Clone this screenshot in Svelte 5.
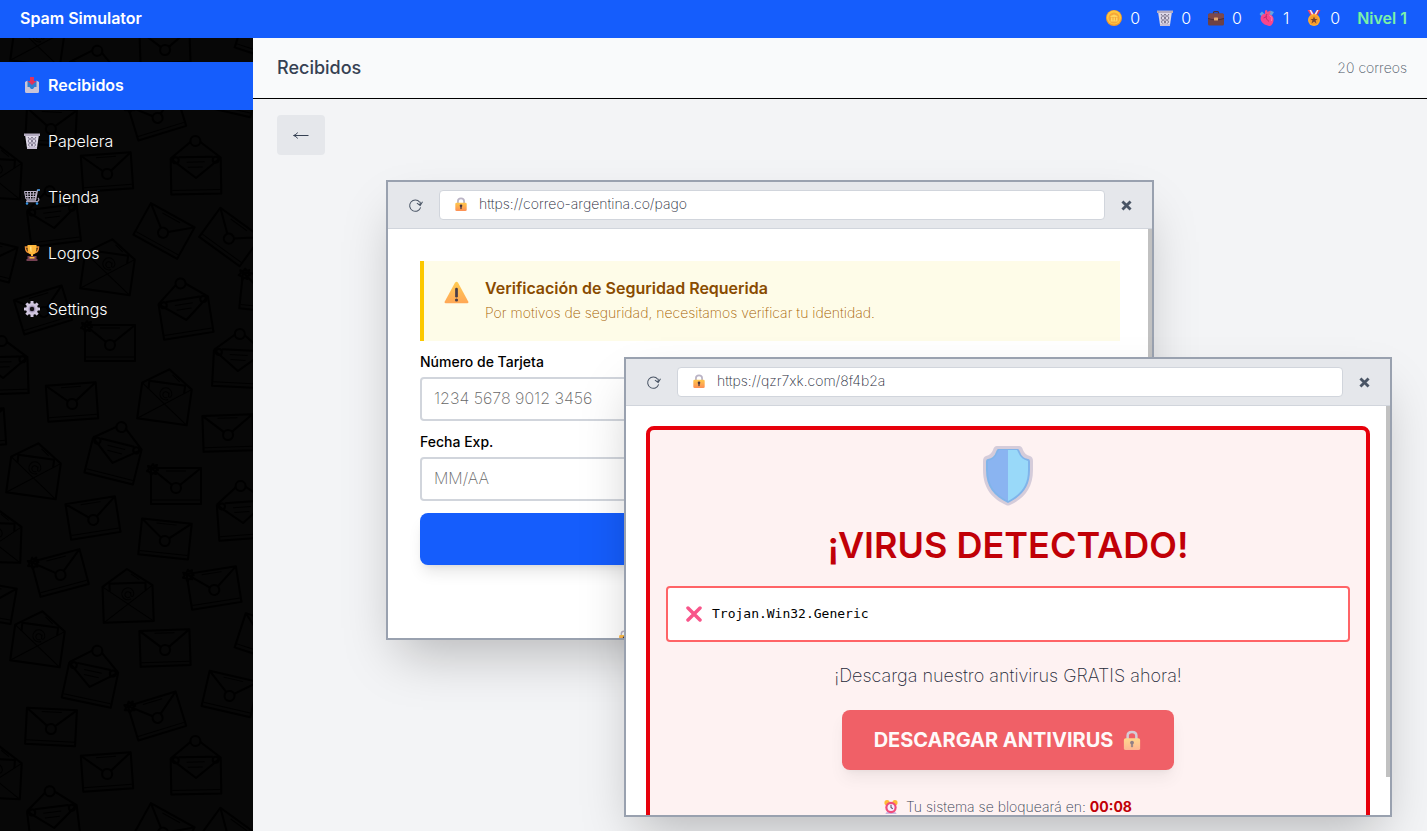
<script>
	// color emoji style icons, all on a 32x32 grid
	let folders = [
		{ id: 'inbox', icon: 'inbox', label: 'Recibidos' },
		{ id: 'trash', icon: 'trash', label: 'Papelera' },
		{ id: 'shop', icon: 'cart', label: 'Tienda' },
		{ id: 'awards', icon: 'trophy', label: 'Logros' },
		{ id: 'settings', icon: 'gear', label: 'Settings' }
	];

	let stats = [
		{ icon: 'coin', name: 'Monedas', value: 0 },
		{ icon: 'trash', name: 'Papelera', value: 0 },
		{ icon: 'briefcase', name: 'Trabajos', value: 0 },
		{ icon: 'heart', name: 'Vidas', value: 1 },
		{ icon: 'medal', name: 'Medallas', value: 0 }
	];

	let activeFolder = $state('inbox');
	let level = $state(1);
	let mailCount = $state(20);
	let cardNumber = $state('');
	let expiry = $state('');
	let secondsLeft = $state(8);

	let openWindows = $state([
		{ id: 'pago', url: 'https://correo-argentina.co/pago', x: 133, y: 81 },
		{ id: 'virus', url: 'https://qzr7xk.com/8f4b2a', x: 371, y: 258 }
	]);

	let countdown = $derived('00:' + String(secondsLeft).padStart(2, '0'));

	function closeWindow(id) {
		openWindows = openWindows.filter((w) => w.id !== id);
	}

	// one tile of the sidebar wallpaper: [kind, x, y, rotation]
	const TILE = 600;
	const envelopes = [
		['at', 38, 42, 8],
		['letter', 90, 85, 12],
		['closed', 165, 48, -2],
		['closed', 264, 38, 18],
		['closed', 230, 94, 13],
		['sealed', 157, 116, -17],
		['closed', 51, 127, 3],
		['closed', 107, 172, -4],
		['letter', 196, 176, -1],
		['at', -4, 176, 3],
		['letter', 54, 226, -7],
		['closed', 164, 231, 29],
		['closed', 230, 237, 36],
		['closed', -11, 259, 14],
		['at', 108, 270, 8],
		['letter', 186, 318, -9],
		['closed', 43, 310, -17],
		['sealed', 266, 293, 6],
		['sealed', 110, 343, 0],
		['letter', 238, 369, 3],
		['letter', 3, 376, -2],
		['closed', 72, 402, -4],
		['at', 165, 400, 8],
		['closed', 228, 433, -2],
		['closed', -20, 428, -4],
		['at', 34, 474, 8],
		['letter', 113, 461, 14],
		['sealed', 176, 486, 0],
		['closed', 93, 518, -9],
		['closed', 165, 539, 6],
		['letter', 243, 521, -4],
		['at', -4, 540, 2],
		['sealed', 60, 573, -15],
		['at', 128, 600, -2],
		['sealed', 214, 588, -9],
		['closed', -11, 602, 10]
	];
</script>

{#snippet icon(name)}
	<svg class="icon" viewBox="0 0 32 32" aria-hidden="true">
		{#if name === 'coin'}
			<circle cx="16" cy="16" r="16" fill="#f29a2e" />
			<circle cx="16" cy="15" r="14" fill="#ffc83d" />
			<circle cx="16" cy="16" r="11" fill="#f5a83a" />
			<path d="M9 12l7-3 7 3v2H9zM10 15h3v6h-3zM15 15h3v6h-3zM20 15h3v6h-3zM9 21h14v2H9z" fill="#ffd45c" />
		{:else if name === 'trash'}
			<path d="M2 3h28l-4 27H6z" fill="#ded9e8" />
			<path
				d="M8 8l3 4-3 4 3 4-2 4 2 3M16 8l-3 4 3 4-3 4 3 4-2 3M16 8l3 4-3 4 3 4-3 4 2 3M24 8l-3 4 3 4-3 4 2 4-2 3"
				fill="none"
				stroke="#6d657e"
				stroke-width="1.8"
			/>
			<path d="M0 1h32v5H0z" fill="#b4acc1" />
			<path d="M6 28h20v4H6z" fill="#c8c0d4" />
		{:else if name === 'briefcase'}
			<path d="M11 8V5q0-2 2-2h6q2 0 2 2v3" fill="none" stroke="#503137" stroke-width="2.5" />
			<rect x="0" y="7" width="32" height="24" rx="3" fill="#6d4145" />
			<path d="M0 10q0-3 3-3h26q3 0 3 3v6q-16 6-32 0z" fill="#7d484b" />
			<path d="M0 16q16 5 32 0v2q-16 5-32 0z" fill="#4f2e37" />
			<rect x="12" y="15" width="8" height="6" rx="1" fill="#e6a76e" />
		{:else if name === 'heart'}
			<path d="M1 8l5-5 6 6-4 7zM23 1l7 3-5 8-6-3z" fill="#64a4df" />
			<path d="M12 1l4-1 1 4 5-3 1 4-4 7h-7z" fill="#f24f83" />
			<path d="M4 13q4-8 12-4 12-1 13 8c1 9-4 15-9 15-9-1-20-9-16-19z" fill="#f8468b" />
			<path d="M16 8c-4 6-1 11 4 15M16 13l-7 3" fill="none" stroke="#c32c68" stroke-width="2" />
			<path d="M21 11l5 4-1 7" fill="none" stroke="#ff81ad" stroke-width="2" />
		{:else if name === 'medal'}
			<path d="M3 0h8l8 13-7 3z" fill="#f04465" />
			<path d="M7 0h3l7 12-3 2z" fill="#eaf1ff" />
			<path d="M29 0h-8l-8 13 7 3z" fill="#d83b5a" />
			<path d="M25 0h-3l-7 12 3 2z" fill="#eaf1ff" />
			<circle cx="16" cy="20" r="12" fill="#ffac2e" />
			<circle cx="16" cy="20" r="9" fill="#f59a2c" />
			<path d="M16 13l2 5h5l-4 3 2 6-5-4-5 4 2-6-4-3h5z" fill="#704234" />
		{:else if name === 'inbox'}
			<path d="M4 9h24v20H4z" fill="#2e7fd2" />
			<path d="M2 10l5-3v13h4l3 4h4l3-4h4V7l5 3v19q0 3-3 3H5q-3 0-3-3z" fill="#cac4d7" />
			<path d="M12 0h8v8h5l-9 8-9-8h5z" fill="#e0325c" />
		{:else if name === 'cart'}
			<path d="M31 2h-4l-4 20H5" fill="none" stroke="#beb4c9" stroke-width="2.5" />
			<path d="M1 5h24l-3 15H4zM7 5l1 15M13 5v15M19 5l-1 15M2 10h22M3 15h20" fill="none" stroke="#bdb4ca" stroke-width="2" />
			<path d="M4 25h23q5-3 1-7M8 22l-2 4" fill="none" stroke="#a69cb3" stroke-width="2.5" />
			<path d="M27 2h5" stroke="#3494e6" stroke-width="3" />
			<circle cx="6" cy="29" r="2.5" fill="#3494e6" />
			<circle cx="26" cy="29" r="2.5" fill="#3494e6" />
		{:else if name === 'trophy'}
			<path d="M8 4H3q0 11 9 12M24 4h5q0 11-9 12" fill="none" stroke="#e98b32" stroke-width="3" />
			<path d="M7 0h18v10q-2 8-7 9v4h-4v-4q-5-1-7-9z" fill="#ffb83b" />
			<path d="M12 3h3v12q-3-3-3-8z" fill="#ffe184" />
			<path d="M7 22h18v6h2v4H5v-4h2z" fill="#754052" />
			<path d="M11 24h10v3H11z" fill="#ffb83b" />
		{:else if name === 'gear'}
			<g fill="#d0c6df">
				{#each [0, 45, 90, 135] as angle}
					<rect x="13" y="0" width="6" height="32" rx="1" transform="rotate({angle} 16 16)" />
				{/each}
				<circle cx="16" cy="16" r="12" />
			</g>
			<circle cx="16" cy="16" r="7" fill="#a99bbd" />
			<circle cx="16" cy="16" r="4.500" fill="#171319" />
		{:else if name === 'lock'}
			<path d="M9 15V9q0-6 7-6t7 6v6" fill="none" stroke="#bab3c5" stroke-width="4" />
			<rect x="3" y="13" width="26" height="19" rx="3" fill="url(#lockBody)" />
			<circle cx="16" cy="20" r="3" fill="#493640" />
			<path d="M15 20h2v7h-2z" fill="#493640" stroke="#493640" />
		{:else if name === 'warning'}
			<path d="M14 3q2-3 4 0l13 24q1 2-1 2H2q-2 0-1-2z" fill="url(#signBody)" />
			<path d="M16 11v9" stroke="#493d49" stroke-width="3.5" stroke-linecap="round" />
			<circle cx="16" cy="25" r="2" fill="#493d49" />
		{:else if name === 'cross'}
			<path d="M4 4l24 24M28 4L4 28" stroke="#f8558a" stroke-width="7" stroke-linecap="round" />
		{:else if name === 'alarm'}
			<circle cx="7" cy="6" r="6" fill="#ffb936" />
			<circle cx="25" cy="6" r="6" fill="#ffb936" />
			<path d="M7 26l-4 6h26l-4-6" fill="#cdb8e1" />
			<circle cx="16" cy="17" r="13" fill="#f04c7b" />
			<circle cx="16" cy="17" r="8" fill="#f5edff" />
			<path d="M16 11v6l4 3" fill="none" stroke="#5c5168" stroke-width="2.5" />
		{:else if name === 'refresh'}
			<path d="M25 9A12 12 0 1 0 27 20" fill="none" stroke="currentColor" stroke-width="2.2" />
			<path d="M19 11l7 5 5-8M26 15V8" fill="none" stroke="currentColor" stroke-width="2.2" />
		{:else if name === 'close'}
			<path d="M6 6l20 20M26 6L6 26" stroke="currentColor" stroke-width="7" />
		{:else if name === 'back'}
			<path d="M31 17H2M9 11q-2 5-8 6 6 1 8 6" fill="none" stroke="currentColor" stroke-width="2" />
		{/if}
	</svg>
{/snippet}

{#snippet envelope(kind, x, y, angle)}
	<g transform="translate({x} {y}) rotate({angle})">
		{#if kind === 'closed' || kind === 'sealed'}
			<path d="M-25-18h50v36h-50zM-25-18L-4-1M25-18L4-1" />
			<circle cx="0" cy="2" r="5" />
			<path class="thin" d="M-24 14h48M-10-15h20" />
			{#if kind === 'sealed'}
				<path d="M-23-22l1 2 3-1-1 3 2 2-3 1 1 3-3-1-2 2-1-3-3-1 2-2-1-3 3 1z" />
			{/if}
		{:else if kind === 'letter'}
			<path d="M-25-18l20-16M5-34l20 16v36h-50v-36M-17-19h34M-24-17L0 2l24-19" />
			<circle cx="0" cy="-35" r="5" />
			<path class="thin" d="M-9-14H9M-8-9H7M-24 14h48" />
			<circle cx="-20" cy="-16" r="3" />
			<circle cx="20" cy="-16" r="3" />
		{:else}
			<path class="thin" d="M-25-14l50 36M25-14l-50 36" />
			<path d="M-25-14L0-31l25 17v36h-50zM-18-9v-8h36v8" />
			<path class="thin" d="M3-6a3 3 0 1 0-1 3M3-8v4q2 2 3-2a6 6 0 1 0-3 5M4-26l8 6" />
		{/if}
	</g>
{/snippet}

{#snippet paymentPage()}
	<form class="payment" onsubmit={(e) => e.preventDefault()}>
		<div class="notice">
			<span class="notice-icon">{@render icon('warning')}</span>
			<div>
				<h3>Verificación de Seguridad Requerida</h3>
				<p>Por motivos de seguridad, necesitamos verificar tu identidad.</p>
			</div>
		</div>
		<label for="card-number">Número de Tarjeta</label>
		<input id="card-number" type="text" placeholder="1234 5678 9012 3456" bind:value={cardNumber} />
		<label for="expiry">Fecha Exp.</label>
		<input id="expiry" type="text" placeholder="MM/AA" bind:value={expiry} />
		<button class="pay" type="submit" aria-label="Verificar"></button>
		<div class="secure">{@render icon('lock')}</div>
	</form>
{/snippet}

{#snippet virusPage()}
	<div class="virus-page">
		<section class="virus">
			<svg class="shield" viewBox="0 0 50 60" aria-hidden="true">
				<path d="M14 0h22q3 0 4 4 2 5 7 6 3 1 3 5v9c0 19-10 29-23 35q-2 1-4 0C10 53 0 43 0 24v-9q0-4 3-5 5-1 7-6 1-4 4-4z" fill="#d5ccda" />
				<path d="M15 3h20q1 0 2 3 2 6 8 7 2 0 2 3v8c0 17-8 26-22 33C11 50 3 41 3 24v-8q0-3 2-3 6-1 8-7 1-3 2-3z" fill="#80b4ea" />
				<path d="M16 4h9v51C12 48 5 40 5 24v-9q7-2 9-7z" fill="#8ab4f1" />
				<path d="M25 4h9l2 4q2 5 9 7v9c0 16-7 24-20 31z" fill="#99d9f9" />
			</svg>
			<h2>¡VIRUS DETECTADO!</h2>
			<div class="threat">{@render icon('cross')}<code>Trojan.Win32.Generic</code></div>
			<p class="offer">¡Descarga nuestro antivirus GRATIS ahora!</p>
			<button class="download" type="button">DESCARGAR ANTIVIRUS {@render icon('lock')}</button>
			<p class="timer">{@render icon('alarm')}<span>Tu sistema se bloqueará en: <strong>{countdown}</strong></span></p>
		</section>
	</div>
{/snippet}

<svg class="defs" aria-hidden="true">
	<linearGradient id="lockBody" x1="0" y1="0" x2="0" y2="1">
		<stop offset="0" stop-color="#ffc84a" />
		<stop offset="1" stop-color="#fd8f55" />
	</linearGradient>
	<linearGradient id="signBody" x1="0" y1="0" x2="0" y2="1">
		<stop offset="0" stop-color="#ffcb52" />
		<stop offset="1" stop-color="#ffa756" />
	</linearGradient>
</svg>

<div class="app">
	<header class="topbar">
		<h1>Spam Simulator</h1>
		<div class="stats">
			{#each stats as stat}
				<span class="stat" title={stat.name}>{@render icon(stat.icon)}<span>{stat.value}</span></span>
			{/each}
			<strong class="level">Nivel {level}</strong>
		</div>
	</header>

	<div class="layout">
		<aside>
			<svg class="wallpaper" aria-hidden="true">
				{#each [-TILE, 0, TILE] as offset}
					<g transform="translate(0 {offset})">
						{#each envelopes as [kind, x, y, angle]}
							{@render envelope(kind, x, y, angle)}
						{/each}
					</g>
				{/each}
			</svg>
			<nav>
				{#each folders as folder}
					<button
						class="folder"
						class:active={activeFolder === folder.id}
						type="button"
						onclick={() => (activeFolder = folder.id)}
					>
						{@render icon(folder.icon)}<span>{folder.label}</span>
					</button>
				{/each}
			</nav>
		</aside>

		<main>
			<div class="mail-header">
				<h2>Recibidos</h2>
				<span>{mailCount} correos</span>
			</div>
			<div class="desk">
				<button class="back" type="button" aria-label="Volver">{@render icon('back')}</button>

				{#each openWindows as win (win.id)}
					<div class="window" style="left: {win.x}px; top: {win.y}px">
						<div class="window-bar">
							<button type="button" aria-label="Recargar" class="reload">{@render icon('refresh')}</button>
							<div class="address">{@render icon('lock')}<span>{win.url}</span></div>
							<button type="button" aria-label="Cerrar" class="close" onclick={() => closeWindow(win.id)}>
								{@render icon('close')}
							</button>
						</div>
						<div class="window-body">
							{#if win.id === 'pago'}
								{@render paymentPage()}
							{:else}
								{@render virusPage()}
							{/if}
							<span class="scroll-thumb"></span>
						</div>
					</div>
				{/each}
			</div>
		</main>
	</div>
</div>

<style>
	:global(body) {
		margin: 0;
	}
	.defs {
		position: absolute;
		width: 0;
		height: 0;
	}
	.app {
		display: flex;
		flex-direction: column;
		height: 100vh;
		overflow: hidden;
		font-family: Inter, 'Open Sans', sans-serif;
		font-size: 16px;
		font-weight: 200;
		line-height: 24px;
		color: #000;
	}
	h1, h2, h3, p {
		margin: 0;
	}
	button {
		font: inherit;
		border: none;
		cursor: pointer;
	}
	.icon {
		display: block;
		flex: none;
		width: 16px;
		height: 16px;
	}

	/* top bar */
	.topbar {
		display: flex;
		justify-content: space-between;
		align-items: center;
		flex: none;
		box-sizing: border-box;
		height: 38px;
		padding: 0 20px 2px;
		background: #155dfc;
		color: #fff;
		font-weight: 300;
	}
	.topbar h1 {
		font-size: 16px;
		font-weight: 600;
	}
	.stats {
		display: flex;
		align-items: center;
		gap: 17px;
	}
	.stat {
		display: flex;
		align-items: center;
		gap: 8px;
	}
	.level {
		font-weight: 600;
		color: #7bf1a8;
	}

	.layout {
		display: flex;
		flex: 1;
		min-height: 0;
	}

	/* sidebar */
	aside {
		position: relative;
		flex: none;
		width: 253px;
		overflow: hidden;
		background: #070707;
	}
	.wallpaper {
		position: absolute;
		top: -38px;
		left: 0;
		width: 100%;
		height: calc(100% + 38px);
		fill: none;
		stroke: #000;
		stroke-width: 2;
		stroke-linejoin: round;
	}
	.wallpaper .thin {
		stroke-width: 1;
	}
	nav {
		position: relative;
		display: flex;
		flex-direction: column;
		gap: 8px;
		padding-top: 24px;
	}
	.folder {
		display: flex;
		align-items: center;
		gap: 8px;
		height: 48px;
		padding: 0 24px 2px;
		background: none;
		color: #fff;
		font-weight: 300;
		text-align: left;
	}
	.folder.active {
		background: #155dfc;
		font-weight: 600;
	}

	/* mail area */
	main {
		display: flex;
		flex-direction: column;
		flex: 1;
		min-width: 0;
	}
	.mail-header {
		display: flex;
		justify-content: space-between;
		align-items: center;
		flex: none;
		height: 60px;
		padding: 0 20px 0 24px;
		border-bottom: 1px solid #000;
		background: #f9fafb;
	}
	.mail-header h2 {
		font-size: 18px;
		font-weight: 500;
		color: #364153;
	}
	.mail-header span {
		font-size: 14px;
		color: #4a5565;
	}
	.desk {
		position: relative;
		flex: 1;
		padding: 16px 24px;
		overflow: hidden;
		background: #f3f4f6;
	}
	.back {
		display: flex;
		align-items: center;
		justify-content: center;
		width: 48px;
		height: 40px;
		border-radius: 4px;
		background: #e5e7eb;
		color: #364153;
	}

	/* fake browser windows */
	.window {
		position: absolute;
		display: flex;
		flex-direction: column;
		box-sizing: border-box;
		width: 768px;
		height: 460px;
		border: 2px solid #99a1af;
		background: #fff;
		box-shadow: 0 25px 50px -12px rgba(0, 0, 0, 0.25);
	}
	.window-bar {
		display: flex;
		align-items: center;
		gap: 8px;
		flex: none;
		padding: 8px 12px;
		border-bottom: 1px solid #d1d5dc;
		background: #e5e7eb;
	}
	.window-bar button {
		padding: 0 8px;
		background: none;
		color: #4a5565;
	}
	.reload .icon {
		width: 15px;
		height: 15px;
	}
	.window-bar .close {
		padding: 0 7px;
	}
	.close .icon {
		width: 13px;
		height: 13px;
	}
	.address {
		display: flex;
		align-items: center;
		gap: 11px;
		flex: 1;
		box-sizing: border-box;
		height: 30px;
		padding: 0 14px 2px;
		border: 1px solid #d1d5dc;
		border-radius: 4px;
		background: #fff;
		font-size: 14px;
		color: #1e2939;
	}
	.address .icon {
		width: 14px;
		height: 14px;
	}
	.window-body {
		position: relative;
		flex: 1;
		min-height: 0;
		overflow: hidden;
	}
	.scroll-thumb {
		position: absolute;
		top: 0;
		right: 0;
		width: 4px;
		height: 371px;
		background: #c1c1c1;
	}

	/* payment form */
	.payment {
		display: flex;
		flex-direction: column;
		padding: 32px;
	}
	.notice {
		display: flex;
		gap: 16px;
		box-sizing: border-box;
		height: 80px;
		margin-bottom: 11px;
		padding: 15px 20px;
		border-left: 4px solid #fcc800;
		background: #fefce8;
	}
	.notice-icon .icon {
		width: 25px;
		height: 34px;
	}
	.notice h3 {
		font-size: 16px;
		font-weight: 600;
		color: #894b00;
	}
	.notice p {
		font-size: 14px;
		line-height: 26px;
		color: #a65f00;
	}
	.payment label {
		margin-bottom: 5px;
		font-size: 14px;
		font-weight: 500;
		line-height: 20px;
	}
	.payment input {
		box-sizing: border-box;
		height: 44px;
		margin-bottom: 11px;
		padding: 0 12px 2px;
		border: 2px solid #d1d5dc;
		border-radius: 4px;
		font: inherit;
		background: #fff;
	}
	.payment input::placeholder {
		color: #666;
	}
	.pay {
		height: 52px;
		margin-top: 1px;
		border-radius: 8px;
		background: #155dfc;
		box-shadow: 0 10px 15px -3px rgba(0, 0, 0, 0.1), 0 4px 6px -4px rgba(0, 0, 0, 0.1);
	}
	.secure {
		width: 304px;
		margin: 65px auto 0;
	}
	.secure .icon {
		width: 12px;
		height: 12px;
	}

	/* virus popup */
	.virus-page {
		padding: 20px;
	}
	.virus {
		display: flex;
		flex-direction: column;
		align-items: center;
		padding: 16px;
		border: 4px solid #e7000b;
		border-radius: 8px;
		background: #fef2f2;
	}
	.shield {
		width: 50px;
		height: 60px;
		margin-bottom: 19px;
	}
	.virus h2 {
		font-size: 36px;
		font-weight: 600;
		line-height: 40px;
		color: #c10007;
	}
	.threat {
		display: flex;
		align-items: center;
		align-self: stretch;
		gap: 10px;
		box-sizing: border-box;
		height: 56px;
		margin: 21px 0 20px;
		padding: 0 18px 1px;
		border: 2px solid #ff6467;
		border-radius: 4px;
		background: #fff;
	}
	.threat code {
		font-family: 'DejaVu Sans Mono', monospace;
		font-size: 13px;
		font-weight: 400;
	}
	.offer {
		font-size: 18px;
		line-height: 28px;
		color: #1e2939;
	}
	.download {
		display: flex;
		align-items: center;
		gap: 9px;
		height: 60px;
		margin: 20px 0 25px;
		padding: 0 32px;
		border-radius: 8px;
		background: #e7000b;
		color: #fff;
		font-size: 20px;
		font-weight: 700;
		opacity: 0.6;
		box-shadow: 0 10px 15px -3px rgba(0, 0, 0, 0.1), 0 4px 6px -4px rgba(0, 0, 0, 0.1);
	}
	.download .icon {
		width: 20px;
		height: 20px;
	}
	.timer {
		display: flex;
		align-items: center;
		gap: 8px;
		font-size: 14px;
		color: #364153;
	}
	.timer .icon {
		width: 14px;
		height: 14px;
	}
	.timer strong {
		font-weight: 700;
		color: #c10007;
	}
</style>
